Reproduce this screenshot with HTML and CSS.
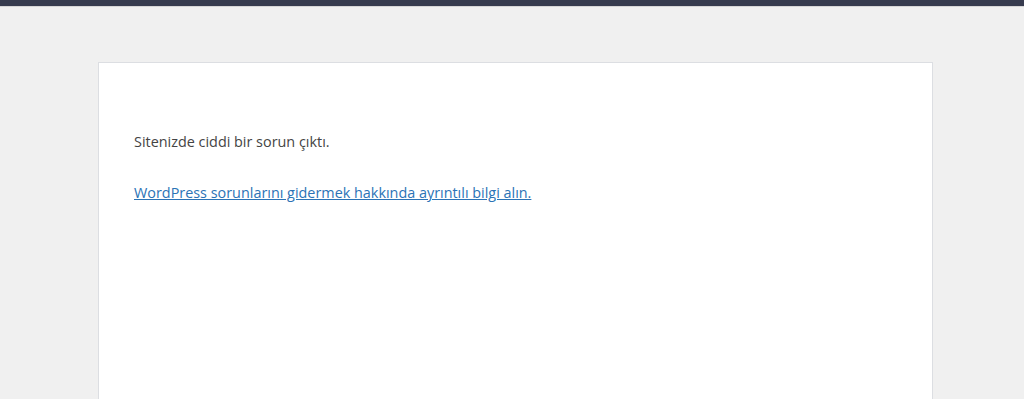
FILE: index.html
```html
<html>
<head>
    <meta charset="utf-8">
    <link rel="stylesheet" href="styles.css">
</head>
<body>
    <div class="topbar"></div>
    <div class="page">
        <div class="die-box">
            <p class="message">Sitenizde ciddi bir sorun çıktı.</p>
            <p class="message"><a href="#">WordPress sorunlarını gidermek hakkında ayrıntılı bilgi alın.</a></p>
        </div>
    </div>
</body>
</html>
```

FILE: styles.css
```css
body {
    margin: 0;
    background: #f0f0f0;
    font-family: "Open Sans", "Noto Sans", sans-serif;
    overflow: hidden;
}
.topbar {
    height: 6px;
    background: #363b4e;
    border-bottom: 1px solid #d6d6d6;
}
.page {
    padding-top: 55px;
    padding-left: 98px;
}
.die-box {
    width: 835px;
    height: 337px;
    background: #fff;
    border: 1px solid #dcdee2;
    border-bottom: 0;
    padding: 68px 35px 0;
    box-sizing: border-box;
}
.message {
    margin: 0 0 30px;
    font-size: 14.4px;
    line-height: 21px;
    color: #444;
}
.message a {
    color: #2b73b6;
}
```
